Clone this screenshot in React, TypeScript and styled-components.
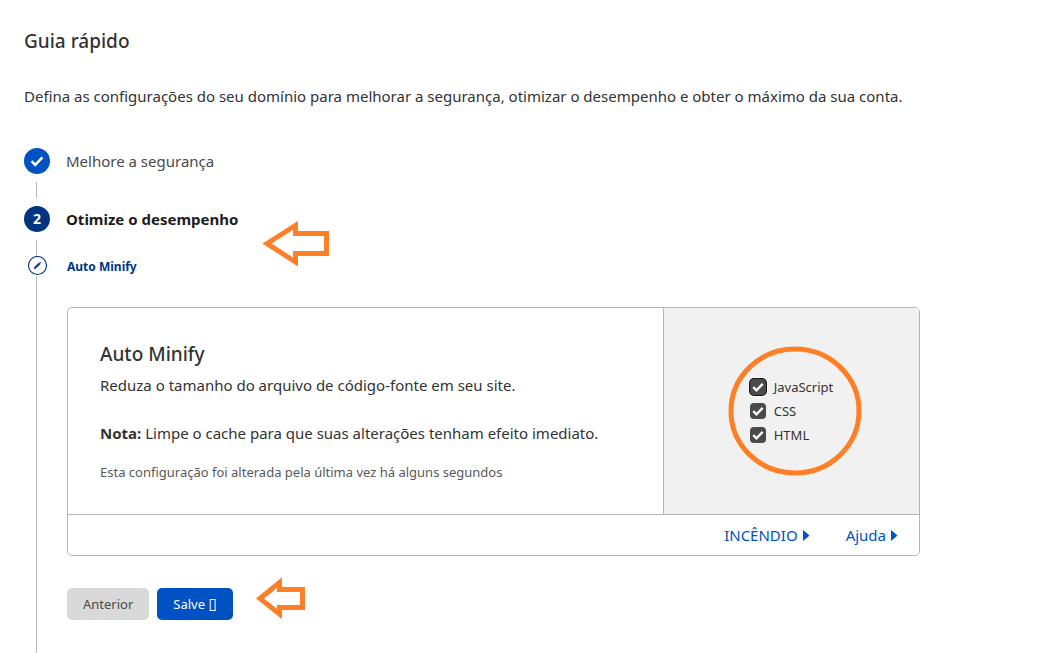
import React from "react";
import styled, { createGlobalStyle } from "styled-components";

const ink = "#333333";
const line = "#b6b6b6";
const blue = "#0051c3";
const navy = "#003681";
const orange = "#ff7f27";

const GlobalStyle = createGlobalStyle`
  *, *::before, *::after { box-sizing: border-box; }
  body {
    margin: 0;
    background: #ffffff;
    color: ${ink};
    font-family: "Segoe UI", "Noto Sans", "Open Sans", sans-serif;
    font-size: 15px;
    line-height: 24px;
  }
  h1, h2, h3, p, ol { margin: 0; padding: 0; }
`;

const Page = styled.main`
  display: flex;
  flex-direction: column;
  min-height: 100vh;
  max-width: 944px;
  padding: 28px 24px 0;
`;

const PageTitle = styled.h1`
  font-size: 19px;
  font-weight: 500;
  line-height: 26px;
`;

const Intro = styled.p`
  margin-top: 30px;
`;

const Steps = styled.ol`
  display: flex;
  flex: 1;
  flex-direction: column;
  margin-top: 40px;
  list-style: none;
`;

const Step = styled.li<{ $grow?: boolean }>`
  display: grid;
  grid-template-columns: 26px minmax(0, 1fr);
  column-gap: 17px;
  flex: ${(p) => (p.$grow ? "1 0 auto" : "0 0 auto")};
`;

const Rail = styled.div`
  display: flex;
  flex-direction: column;
  align-items: center;
`;

const Marker = styled.span<{ $color: string }>`
  display: flex;
  align-items: center;
  justify-content: center;
  width: 26px;
  height: 26px;
  border-radius: 50%;
  background: ${(p) => p.$color};
  color: #ffffff;
  font-size: 14px;
  font-weight: 700;
`;

const Connector = styled.span<{ $fill?: boolean }>`
  width: 1px;
  height: 16px;
  flex: ${(p) => (p.$fill ? "1 0 auto" : "0 0 auto")};
  margin: ${(p) => (p.$fill ? "0 1px 0 0" : "8px 1px 8px 0")};
  background: ${line};
`;

const TailConnector = styled(Connector)`
  margin-bottom: 0;
`;

const StepTitle = styled.h2<{ $current?: boolean }>`
  position: relative;
  justify-self: start;
  align-self: start;
  margin-left: -1px;
  color: ${(p) => (p.$current ? "#1d1d1d" : "#4a4a4a")};
  font-size: 15px;
  font-weight: ${(p) => (p.$current ? 700 : 400)};
  line-height: 26px;
`;

const SubTitle = styled.h3`
  color: ${navy};
  font-size: 12px;
  font-weight: 700;
  line-height: 22px;
`;

const Card = styled.section`
  margin-top: 29px;
  border: 1px solid ${line};
  border-radius: 5px;
  overflow: hidden;
`;

const CardBody = styled.div`
  display: grid;
  grid-template-columns: minmax(0, 1fr) 256px;
`;

const Description = styled.div`
  padding: 32px;
`;

const CardTitle = styled.h2`
  margin-bottom: 5px;
  font-size: 19px;
  font-weight: 500;
  line-height: 28px;
`;

const Note = styled.p`
  margin-top: 24px;
`;

const Updated = styled.p`
  margin-top: 17px;
  color: #595959;
  font-size: 13px;
  line-height: 20px;
`;

const OptionPanel = styled.div`
  display: flex;
  align-items: center;
  justify-content: center;
  border-left: 1px solid ${line};
  background: #f1f1f1;
`;

const OptionList = styled.div`
  position: relative;
  display: flex;
  flex-direction: column;
`;

const Option = styled.label`
  display: flex;
  align-items: center;
  gap: 8px;
  font-size: 13px;
  line-height: 24px;
`;

const CheckWrap = styled.span`
  display: grid;
  width: 16px;
  height: 16px;
  place-items: center;

  > * { grid-area: 1 / 1; }
  svg { pointer-events: none; z-index: 1; }
`;

const Checkbox = styled.input<{ $focused?: boolean }>`
  appearance: none;
  width: 16px;
  height: 16px;
  margin: 0;
  border-radius: 4px;
  background: #4a4a4a;
  box-shadow: ${(p) => (p.$focused ? "0 0 0 1px #101010, 0 0 0 2px #ffffff" : "none")};
`;

const CardFooter = styled.footer`
  display: flex;
  justify-content: flex-end;
  gap: 36px;
  padding: 8px 21px;
  border-top: 1px solid ${line};
`;

const FooterLink = styled.a`
  display: flex;
  align-items: center;
  gap: 5px;
  color: ${blue};
  text-decoration: none;
`;

const Actions = styled.div`
  position: relative;
  display: flex;
  width: max-content;
  gap: 8px;
  margin-top: 32px;
  padding-bottom: 32px;
`;

const Button = styled.button<{ $primary?: boolean }>`
  height: 32px;
  padding: 0 16px;
  border: 0;
  border-radius: 5px;
  background: ${(p) => (p.$primary ? blue : "#d9d9d9")};
  color: ${(p) => (p.$primary ? "#ffffff" : "#4a4a4a")};
  font: inherit;
  font-size: 13px;
`;

const Glyph = styled.span`
  font-family: "DejaVu Sans", sans-serif;
  font-size: 16px;
  line-height: 16px;
`;

const StepArrow = styled.svg`
  position: absolute;
  top: 15px;
  left: 197px;
`;

const ButtonArrow = styled.svg`
  position: absolute;
  top: -11px;
  left: 189px;
`;

const Ring = styled.svg`
  position: absolute;
  top: -29px;
  left: -22px;
  pointer-events: none;
`;

const Tick = ({ size }: { size: number }) => (
  <svg width={size} height={size} viewBox="0 0 16 16" fill="none" aria-hidden="true">
    <path d="M2.6 8.2 6.2 11.8 13.4 4.4" stroke="#ffffff" strokeWidth="2.6" />
  </svg>
);

const Caret = () => (
  <svg width="7" height="12" viewBox="0 0 7 12" aria-hidden="true">
    <path d="M0 1 6.5 6.5 0 12Z" fill={blue} />
  </svg>
);

const Pencil = () => (
  <svg width="20" height="20" viewBox="0 0 20 20" aria-hidden="true">
    <circle cx="10.5" cy="9.5" r="9" fill="#ffffff" stroke={navy} strokeWidth="1.1" />
    <path d="M6.8 13.2 7.4 11.1 12 6.5 13.5 8 8.9 12.6Z" fill={navy} />
    <path d="M12.4 6.1 12.9 5.6 14.4 7.1 13.9 7.6Z" fill={navy} />
  </svg>
);

const options = ["JavaScript", "CSS", "HTML"];

export default function App() {
  return (
    <>
      <GlobalStyle />
      <Page>
        <PageTitle>Guia rápido</PageTitle>
        <Intro>
          Defina as configurações do seu domínio para melhorar a segurança, otimizar o desempenho e obter o máximo da sua conta.
        </Intro>
        <Steps>
          <Step>
            <Rail>
              <Marker $color={blue}><Tick size={16} /></Marker>
              <Connector />
            </Rail>
            <StepTitle>Melhore a segurança</StepTitle>
          </Step>
          <Step>
            <Rail>
              <Marker $color={navy}>2</Marker>
              <TailConnector />
            </Rail>
            <StepTitle $current>
              Otimize o desempenho
              <StepArrow width="66" height="46" viewBox="0 0 66 46" fill="none" aria-hidden="true">
                <path d="M4 22.5 32.5 4.5V12.5H63.5V32.5H32.5V41Z" stroke={orange} strokeWidth="5" />
              </StepArrow>
            </StepTitle>
          </Step>
          <Step $grow>
            <Rail>
              <Pencil />
              <Connector $fill />
            </Rail>
            <div>
              <SubTitle>Auto Minify</SubTitle>
              <Card>
                <CardBody>
                  <Description>
                    <CardTitle>Auto Minify</CardTitle>
                    <p>Reduza o tamanho do arquivo de código-fonte em seu site.</p>
                    <Note>
                      <strong>Nota:</strong> Limpe o cache para que suas alterações tenham efeito imediato.
                    </Note>
                    <Updated>Esta configuração foi alterada pela última vez há alguns segundos</Updated>
                  </Description>
                  <OptionPanel>
                    <OptionList>
                      {options.map((name, i) => (
                        <Option key={name}>
                          <CheckWrap>
                            <Checkbox type="checkbox" defaultChecked $focused={i === 0} />
                            <Tick size={14} />
                          </CheckWrap>
                          {name}
                        </Option>
                      ))}
                      <Ring width="134" height="130" viewBox="0 0 134 130" fill="none" aria-hidden="true">
                        <ellipse cx="67" cy="65" rx="64" ry="62" stroke={orange} strokeWidth="5" />
                      </Ring>
                    </OptionList>
                  </OptionPanel>
                </CardBody>
                <CardFooter>
                  <FooterLink href="#api">INCÊNDIO <Caret /></FooterLink>
                  <FooterLink href="#ajuda">Ajuda <Caret /></FooterLink>
                </CardFooter>
              </Card>
              <Actions>
                <Button type="button">Anterior</Button>
                <Button type="button" $primary>Salve <Glyph>▯</Glyph></Button>
                <ButtonArrow width="50" height="44" viewBox="0 0 50 44" fill="none" aria-hidden="true">
                  <path d="M4 21.5 23.5 5.5V12.5H46.5V30.5H23.5V37Z" stroke={orange} strokeWidth="5" />
                </ButtonArrow>
              </Actions>
            </div>
          </Step>
        </Steps>
      </Page>
    </>
  );
}
